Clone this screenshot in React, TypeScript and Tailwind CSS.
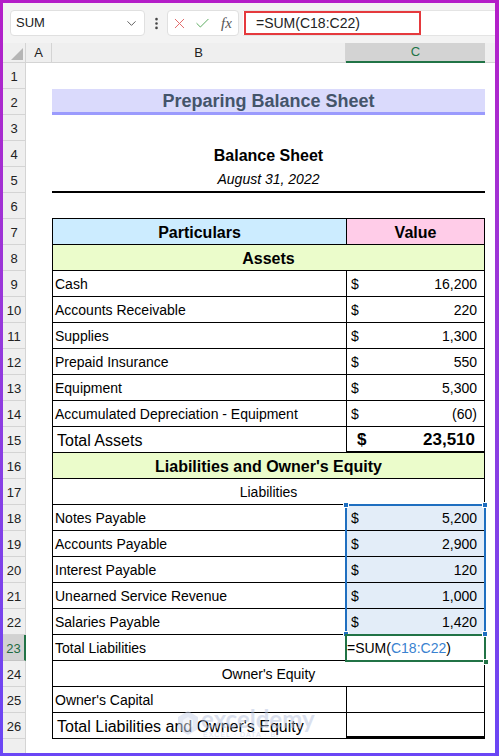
import type { ReactNode } from "react";
import { ChevronDown, EllipsisVertical, X, Check } from "lucide-react";

const font = "font-['Liberation_Sans',Arial,sans-serif]";

function Row({ n, active, children }: { n: number; active?: boolean; children?: ReactNode }) {
  return (
    <div className="flex h-[26px] shrink-0">
      <div
        className={`w-[23px] shrink-0 flex items-center justify-center pt-[2px] border-b text-[13px] ${
          active
            ? "bg-[#d2d2d2] text-[#1e6b41] border-b-[#c4c4c4] border-r-2 border-r-[#217346]"
            : "bg-[#efefef] text-[#222] border-[#d4d4d4] border-r"
        }`}
      >
        {n}
      </div>
      <div className="w-[26px] shrink-0" />
      {children}
    </div>
  );
}

function ItemRow({ n, label, value, selected }: { n: number; label: string; value: string; selected?: boolean }) {
  return (
    <Row n={n}>
      <div className="w-[294px] shrink-0 border-l border-b border-black pl-[2px] pt-[2px] flex items-center text-[14px]">
        {label}
      </div>
      <div
        className={`w-[139px] shrink-0 border-l border-r border-b border-black flex items-center justify-between pl-[4px] pr-[7px] pt-[2px] text-[14px] ${
          selected ? "bg-[#e3edf8]" : ""
        }`}
      >
        <span>$</span>
        <span>{value}</span>
      </div>
    </Row>
  );
}

function MergedRow({ n, children, className = "" }: { n: number; children: ReactNode; className?: string }) {
  return (
    <Row n={n}>
      <div
        className={`w-[433px] shrink-0 border-l border-r border-b border-black flex items-center justify-center pt-[2px] ${className}`}
      >
        {children}
      </div>
    </Row>
  );
}

export default function App() {
  const assets = [
    ["Cash", "16,200"],
    ["Accounts Receivable", "220"],
    ["Supplies", "1,300"],
    ["Prepaid Insurance", "550"],
    ["Equipment", "5,300"],
    ["Accumulated Depreciation - Equipment", "(60)"],
  ];
  const liabilities = [
    ["Notes Payable", "5,200"],
    ["Accounts Payable", "2,900"],
    ["Interest Payable", "120"],
    ["Unearned Service Revenue", "1,000"],
    ["Salaries Payable", "1,420"],
  ];

  return (
    <div className={`h-screen w-full bg-linear-to-b from-[#b41dc8] to-[#6a46f5] pt-[3px] pl-[3px] pr-[4px] pb-[3px] ${font}`}>
      <div className="relative h-full bg-white flex flex-col overflow-hidden text-black">
        {/* formula bar */}
        <div className="h-[40px] shrink-0 bg-[#f3f3f3] flex items-center pl-[7px]">
          <div className="w-[135px] h-[26px] bg-white border border-[#e0e0e0] rounded-[4px] flex items-center justify-between pl-[5px] pr-[5px]">
            <span className="text-[13px] text-[#222]">SUM</span>
            <ChevronDown size={15} strokeWidth={1.5} className="text-[#555]" />
          </div>
          <div className="w-[22px] flex justify-center">
            <EllipsisVertical size={15} strokeWidth={2.2} className="text-[#444]" />
          </div>
          <div className="w-[72px] h-[26px] bg-white border border-[#e0e0e0] rounded-[4px] flex items-center pl-[3px] gap-[6px]">
            <X size={17} strokeWidth={1.4} className="text-[#e26a6a]" />
            <Check size={17} strokeWidth={1.4} className="text-[#5aab5e]" />
            <span className="ml-[4px] font-['Liberation_Serif',serif] italic text-[15px] text-[#555]">fx</span>
          </div>
          <div className="ml-[4px] flex-1 h-[26px] bg-white border-y border-[#e4e4e4] flex">
            <div className="ml-[1px] w-[177px] h-full border-2 border-[#e5393d] flex items-center pl-[10px] text-[14px] text-[#222]">
              =SUM(C18:C22)
            </div>
          </div>
        </div>

        {/* column headers */}
        <div className="h-[20px] shrink-0 flex text-[13px] text-[#222]">
          <div className="w-[23px] shrink-0 bg-[#efefef] border-r border-b border-[#d4d4d4] flex items-end justify-end p-[2px]">
            <svg width="12" height="12" viewBox="0 0 12 12">
              <polygon points="12,0 12,12 0,12" fill="#b5b5b5" />
            </svg>
          </div>
          <div className="w-[26px] shrink-0 bg-[#efefef] border-r border-b border-[#d4d4d4] flex items-center justify-center">A</div>
          <div className="w-[294px] shrink-0 bg-[#efefef] border-r border-b border-[#d4d4d4] flex items-center justify-center">B</div>
          <div className="w-[139px] shrink-0 bg-[#d3d3d3] border-b-2 border-[#217346] text-[#217346] flex items-center justify-center">C</div>
          <div className="flex-1 bg-[#efefef] border-b border-[#d4d4d4]" />
        </div>

        {/* sheet rows */}
        <Row n={1} />
        <Row n={2}>
          <div className="w-[433px] shrink-0 bg-[#dadafc] border-b-[3px] border-[#9b9bfd] flex items-center justify-center pt-[2px] text-[18px] font-bold text-[#44546a]">
            Preparing Balance Sheet
          </div>
        </Row>
        <Row n={3} />
        <Row n={4}>
          <div className="w-[433px] shrink-0 flex items-center justify-center pt-[3px] text-[16px] font-bold">Balance Sheet</div>
        </Row>
        <Row n={5}>
          <div className="w-[433px] shrink-0 border-b-2 border-black flex items-center justify-center pt-[1px] text-[14px] italic">
            August 31, 2022
          </div>
        </Row>
        <Row n={6}>
          <div className="w-[433px] shrink-0 border-b border-black" />
        </Row>
        <Row n={7}>
          <div className="w-[294px] shrink-0 border-l border-b border-black bg-[#ccecff] flex items-center justify-center pt-[2px] text-[16px] font-bold">
            Particulars
          </div>
          <div className="w-[139px] shrink-0 border-l border-r border-b border-black bg-[#ffcce8] flex items-center justify-center pt-[2px] text-[16px] font-bold">
            Value
          </div>
        </Row>
        <MergedRow n={8} className="bg-[#ebfccb] text-[16px] font-bold">
          Assets
        </MergedRow>
        {assets.map(([l, v], i) => (
          <ItemRow key={l} n={9 + i} label={l} value={v} />
        ))}
        <Row n={15}>
          <div className="w-[294px] shrink-0 border-l border-b border-black pl-[4px] pt-[2px] flex items-center text-[16px]">
            Total Assets
          </div>
          <div className="w-[139px] shrink-0 border-l border-r border-b-2 border-black flex items-center justify-between pl-[10px] pr-[9px] pt-[2px] text-[17px] font-bold">
            <span>$</span>
            <span>23,510</span>
          </div>
        </Row>
        <MergedRow n={16} className="bg-[#ebfccb] text-[16px] font-bold">
          Liabilities and Owner&apos;s Equity
        </MergedRow>
        <MergedRow n={17} className="text-[14px]">
          Liabilities
        </MergedRow>
        {liabilities.map(([l, v], i) => (
          <ItemRow key={l} n={18 + i} label={l} value={v} selected />
        ))}
        <Row n={23} active>
          <div className="w-[294px] shrink-0 border-l border-b border-black pl-[2px] pt-[2px] flex items-center text-[14px]">
            Total Liabilities
          </div>
          <div className="w-[139px] shrink-0 border-r border-b border-black flex items-center pl-[1px] pt-[2px] text-[14px]">
            <span>=SUM(</span>
            <span className="text-[#3a82d0]">C18:C22</span>
            <span>)</span>
          </div>
        </Row>
        <MergedRow n={24} className="text-[14px]">
          Owner&apos;s Equity
        </MergedRow>
        <Row n={25}>
          <div className="w-[294px] shrink-0 border-l border-b border-black pl-[2px] pt-[2px] flex items-center text-[14px]">
            Owner&apos;s Capital
          </div>
          <div className="w-[139px] shrink-0 border-l border-r border-b border-black" />
        </Row>
        <Row n={26}>
          <div className="w-[294px] shrink-0 border-l border-b border-black pl-[4px] pt-[2px] flex items-center text-[16px]">
            Total Liabilities and Owner&apos;s Equity
          </div>
          <div className="w-[139px] shrink-0 border-l border-r border-b-[3px] border-b-double border-black" />
        </Row>
        <div className="flex flex-1">
          <div className="w-[23px] shrink-0 bg-[#efefef] border-r border-[#d4d4d4]" />
        </div>

        {/* selection C18:C22 */}
        <div className="absolute left-[342px] top-[501px] w-[141px] h-[132px] border-2 border-[#1f6fc0] pointer-events-none" />
        {[
          "left-[340px] top-[499px]",
          "left-[479px] top-[499px]",
          "left-[340px] top-[628px]",
          "left-[479px] top-[628px]",
        ].map((p) => (
          <div key={p} className={`absolute ${p} w-[6px] h-[6px] bg-[#1f6fc0] border border-white`} />
        ))}
        {/* active cell C23 */}
        <div className="absolute left-[342px] top-[631px] w-[141px] h-[28px] border-2 border-[#217346] pointer-events-none" />
        <div className="absolute left-[479px] top-[628px] w-[6px] h-[6px] bg-[#1f6fc0] border border-white" />
        <div className="absolute left-[480px] top-[656px] w-[6px] h-[6px] bg-[#217346] border border-white" />

        {/* watermark */}
        <div className="absolute left-[175px] top-[704px] flex items-center gap-[3px] opacity-50 pointer-events-none">
          <svg width="20" height="24" viewBox="0 0 20 24">
            <polygon points="10,0 20,6 20,18 10,24 0,18 0,6" fill="#c9d3ea" />
            <polygon points="10,6 15,9 15,15 10,18 5,15 5,9" fill="#e6ebf6" />
          </svg>
          <div className="flex flex-col leading-none">
            <span className="text-[24px] font-bold text-[#b7c3df] font-['Lato',sans-serif]">exceldemy</span>
            <span className="text-[7px] tracking-[1px] text-[#b7c3df] ml-[2px]">EXCEL · DATA · BI</span>
          </div>
        </div>
      </div>
    </div>
  );
}
